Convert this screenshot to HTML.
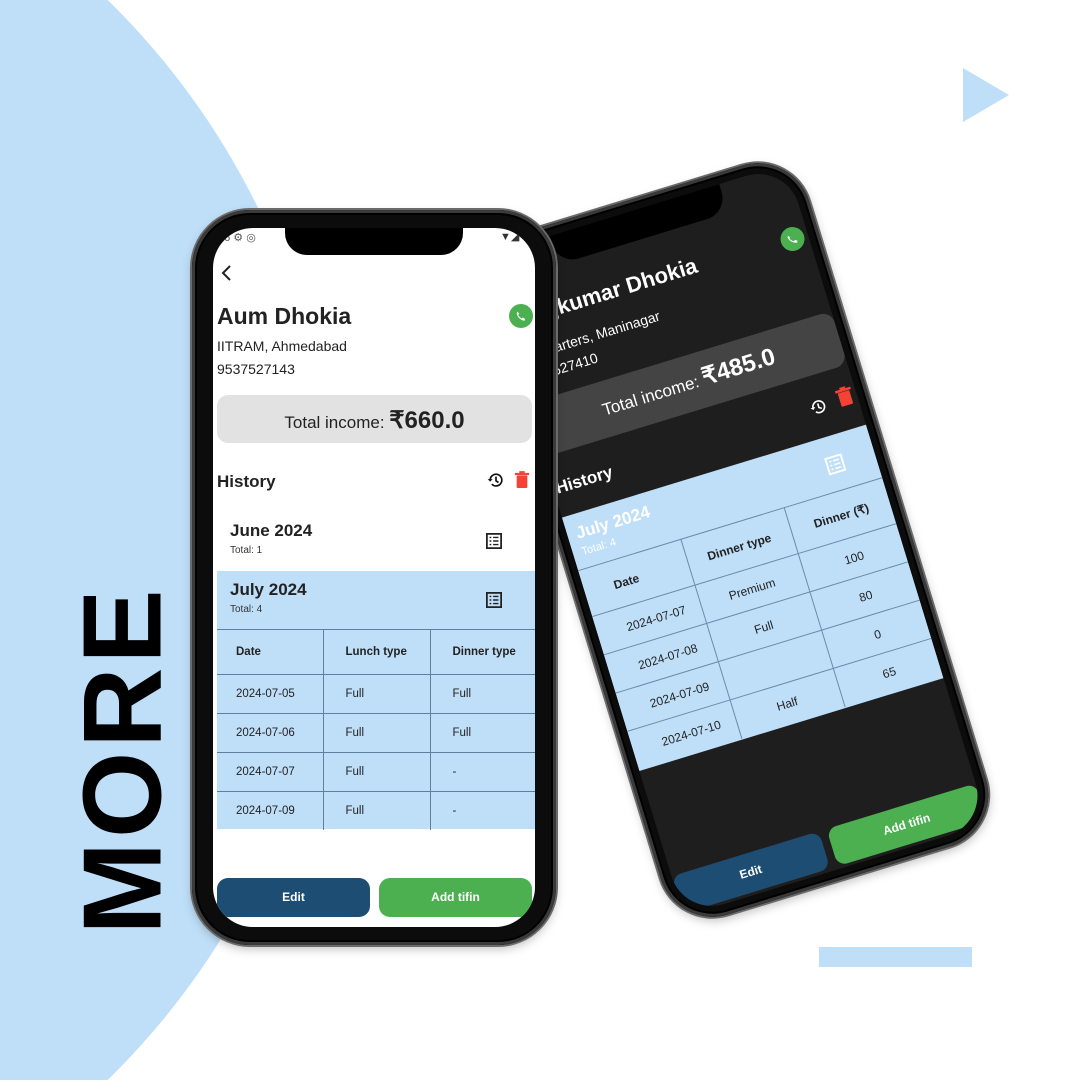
<!DOCTYPE html>
<html style="width:1080px;height:1080px;overflow:hidden"><head><meta charset="utf-8"><style>
*{margin:0;padding:0;box-sizing:border-box}
body{width:1080px;height:1080px;overflow:hidden;background:#fff;font-family:"Liberation Sans",sans-serif}
#wrap{position:relative;width:1080px;height:1080px;overflow:hidden}
.abs{position:absolute}
.more{position:absolute;left:123px;top:760px;transform:translate(-50%,-50%) rotate(-90deg);font-size:111px;font-weight:bold;color:#000;letter-spacing:4px;line-height:1;white-space:nowrap}
.phone{position:absolute;background:#0c0c0c;border-radius:58px;box-shadow:0 0 0 2px #6a6a6a,inset 0 0 0 3px #3a3a3a,inset 0 0 0 5px #000,0 4px 10px rgba(0,0,0,.25)}
.screen{position:absolute;overflow:hidden;border-radius:40px}
.notch{position:absolute;background:#000;border-radius:0 0 22px 22px}
.t{position:absolute;white-space:nowrap}
table{border-collapse:collapse;position:absolute}
</style></head><body><div id="wrap">
<svg class="abs" style="left:0;top:0" width="1080" height="1080"><circle cx="-420" cy="540" r="755" fill="#bfdff9"/><polygon points="963,68 1009,95 963,122" fill="#bfdff9"/><rect x="819" y="947" width="153" height="20" fill="#bfdff9"/></svg>
<div class="more">MORE</div>

<!-- RIGHT PHONE -->
<div class="phone" style="left:565px;top:184px;width:340px;height:712px;transform:rotate(-17deg);border-radius:54px">
 <div class="screen" style="left:11px;top:11px;width:318px;height:690px;background:#1e1e1e;border-radius:42px">
  <div class="notch" style="left:70px;top:0;width:178px;height:30px"></div>
  <div class="abs" style="left:290px;top:62px;width:24px;height:24px;border-radius:50%;background:#4caf50"><svg width="24" height="24" viewBox="0 0 24 24"><path d="M8.6 7.5l1.6 2.2-1 1.2c.8 1.6 2 2.8 3.6 3.6l1.2-1 2.2 1.6-.8 1.6c-3.8-.3-7.4-3.9-7.7-7.7z" fill="#fff"/></svg></div>
  <div class="t" style="left:23px;top:58px;font-size:22px;font-weight:bold;color:#fff">Rajkumar Dhokia</div>
  <div class="t" style="left:24px;top:100px;font-size:14px;color:#fff">Quarters, Maninagar</div>
  <div class="t" style="left:3px;top:122px;font-size:14px;color:#fff">9537527410</div>
  <div class="abs" style="left:3px;top:154px;width:315px;height:56px;background:#444;border-radius:12px"></div>
  <div class="t" style="left:3px;top:166px;width:315px;text-align:center;color:#fff;font-size:17px">Total income: <b style="font-size:24px">₹485.0</b></div>
  <div class="t" style="left:3px;top:234px;font-size:17px;font-weight:bold;color:#fff">History</div>
  <svg class="abs" style="left:268px;top:232px" width="20" height="20" viewBox="0 0 24 24"><path d="M5 12a7 7 0 1 1 2 5" fill="none" stroke="#fff" stroke-width="2"/><path d="M2 11l3 3 3-3" fill="#fff"/><path d="M12 8v5l3 2" fill="none" stroke="#fff" stroke-width="2"/></svg>
  <svg class="abs" style="left:297px;top:230px" width="18" height="20" viewBox="0 0 18 20"><rect x="3" y="5" width="12" height="14" rx="1" fill="#f44336"/><rect x="1" y="2" width="16" height="2.5" fill="#f44336"/><rect x="6" y="0" width="6" height="3" fill="#f44336"/></svg>
  <div class="abs" style="left:0;top:273px;width:318px;height:265px;background:#bfdff9"></div>
  <div class="t" style="left:9px;top:283px;font-size:17px;font-weight:bold;color:#fff">July 2024</div>
  <div class="t" style="left:9px;top:306px;font-size:11px;color:#fff">Total: 4</div>
  <svg class="abs" style="left:268px;top:293px" width="18" height="18" viewBox="0 0 18 18"><rect x="1" y="1" width="16" height="16" fill="none" stroke="#fff" stroke-width="2"/><path d="M4 5h2M8 5h6M4 9h2M8 9h6M4 13h2M8 13h6" stroke="#fff" stroke-width="1.6"/></svg>
  <table style="left:-2px;top:328px;width:322px;font-size:12px;color:#222">
   <tr style="height:48px"><th style="width:109px;font-weight:bold;text-align:left;padding-left:32px;border:1px solid #6c8aa8;border-left:none">Date</th><th style="width:108px;border:1px solid #6c8aa8">Dinner type</th><th style="border:1px solid #6c8aa8;border-right:none">Dinner (₹)</th></tr>
   <tr style="height:40px"><td style="padding-left:32px;border:1px solid #6c8aa8;border-left:none">2024-07-07</td><td style="text-align:center;border:1px solid #6c8aa8">Premium</td><td style="text-align:center;border:1px solid #6c8aa8;border-right:none">100</td></tr>
   <tr style="height:40px"><td style="padding-left:32px;border:1px solid #6c8aa8;border-left:none">2024-07-08</td><td style="text-align:center;border:1px solid #6c8aa8">Full</td><td style="text-align:center;border:1px solid #6c8aa8;border-right:none">80</td></tr>
   <tr style="height:40px"><td style="padding-left:32px;border:1px solid #6c8aa8;border-left:none">2024-07-09</td><td style="border:1px solid #6c8aa8"></td><td style="text-align:center;border:1px solid #6c8aa8;border-right:none">0</td></tr>
   <tr style="height:40px"><td style="padding-left:32px;border:1px solid #6c8aa8;border-left:none;border-bottom:none">2024-07-10</td><td style="text-align:center;border:1px solid #6c8aa8;border-bottom:none">Half</td><td style="text-align:center;border:1px solid #6c8aa8;border-right:none;border-bottom:none">65</td></tr>
  </table>
  <div class="abs" style="left:0;top:648px;width:154px;height:39px;background:#1e4d73;border-radius:10px;color:#fff;font-weight:bold;font-size:12px;text-align:center;line-height:39px">Edit</div>
  <div class="abs" style="left:162px;top:648px;width:156px;height:39px;background:#4caf50;border-radius:10px;color:#fff;font-weight:bold;font-size:12px;text-align:center;line-height:39px">Add tifin</div>
 </div>
</div>

<!-- LEFT PHONE -->
<div class="phone" style="left:192px;top:210px;width:364px;height:735px">
 <div class="screen" style="left:21px;top:18px;width:322px;height:699px;background:#fff">
  <div class="notch" style="left:72px;top:0;width:178px;height:27px"></div>
  <div class="t" style="left:5px;top:3px;font-size:11px;color:#555">06 ⚙ ◎</div>
  <div class="t" style="left:287px;top:2px;font-size:11px;color:#333">▼◢</div>
  <svg class="abs" style="left:7px;top:36px" width="14" height="18" viewBox="0 0 14 18"><path d="M10 2L3 9l7 7" fill="none" stroke="#222" stroke-width="2"/></svg>
  <div class="t" style="left:4px;top:75px;font-size:23px;font-weight:bold;color:#222">Aum Dhokia</div>
  <div class="abs" style="left:296px;top:76px;width:24px;height:24px;border-radius:50%;background:#4caf50"><svg width="24" height="24" viewBox="0 0 24 24"><path d="M8.6 7.5l1.6 2.2-1 1.2c.8 1.6 2 2.8 3.6 3.6l1.2-1 2.2 1.6-.8 1.6c-3.8-.3-7.4-3.9-7.7-7.7z" fill="#fff"/></svg></div>
  <div class="t" style="left:4px;top:110px;font-size:14px;color:#222">IITRAM, Ahmedabad</div>
  <div class="t" style="left:4px;top:133px;font-size:14px;color:#222">9537527143</div>
  <div class="abs" style="left:4px;top:167px;width:315px;height:48px;background:#e2e2e2;border-radius:11px"></div>
  <div class="t" style="left:4px;top:178px;width:315px;text-align:center;color:#222;font-size:17px">Total income: <b style="font-size:24px">₹660.0</b></div>
  <div class="t" style="left:4px;top:244px;font-size:17px;font-weight:bold;color:#222">History</div>
  <svg class="abs" style="left:273px;top:242px" width="20" height="20" viewBox="0 0 24 24"><path d="M5 12a7 7 0 1 1 2 5" fill="none" stroke="#111" stroke-width="2"/><path d="M2 11l3 3 3-3" fill="#111"/><path d="M12 8v5l3 2" fill="none" stroke="#111" stroke-width="2"/></svg>
  <svg class="abs" style="left:301px;top:243px" width="16" height="18" viewBox="0 0 18 20"><rect x="3" y="5" width="12" height="14" rx="1" fill="#f44336"/><rect x="1" y="2" width="16" height="2.5" fill="#f44336"/><rect x="6" y="0" width="6" height="3" fill="#f44336"/></svg>
  <div class="t" style="left:17px;top:293px;font-size:17px;font-weight:bold;color:#222">June 2024</div>
  <div class="t" style="left:17px;top:317px;font-size:10px;color:#333">Total: 1</div>
  <svg class="abs" style="left:273px;top:305px" width="16" height="16" viewBox="0 0 18 18"><rect x="1" y="1" width="16" height="16" fill="none" stroke="#222" stroke-width="2"/><path d="M4 5h2M8 5h6M4 9h2M8 9h6M4 13h2M8 13h6" stroke="#222" stroke-width="1.6"/></svg>
  <div class="abs" style="left:4px;top:343px;width:318px;height:258px;background:#bfdff9"></div>
  <div class="t" style="left:17px;top:352px;font-size:17px;font-weight:bold;color:#222">July 2024</div>
  <div class="t" style="left:17px;top:376px;font-size:10px;color:#333">Total: 4</div>
  <svg class="abs" style="left:273px;top:364px" width="16" height="16" viewBox="0 0 18 18"><rect x="1" y="1" width="16" height="16" fill="none" stroke="#222" stroke-width="2"/><path d="M4 5h2M8 5h6M4 9h2M8 9h6M4 13h2M8 13h6" stroke="#222" stroke-width="1.6"/></svg>
  <table style="left:4px;top:401px;width:318px;font-size:11.5px;color:#222">
   <tr style="height:45px;font-weight:bold"><td style="width:106px;padding-left:19px;border:1px solid #5f7f9f;border-left:none">Date</td><td style="width:107px;padding-left:22px;border:1px solid #5f7f9f">Lunch type</td><td style="padding-left:22px;border:1px solid #5f7f9f;border-right:none">Dinner type</td></tr>
   <tr style="height:39px"><td style="padding-left:19px;border:1px solid #5f7f9f;border-left:none">2024-07-05</td><td style="padding-left:22px;border:1px solid #5f7f9f">Full</td><td style="padding-left:22px;border:1px solid #5f7f9f;border-right:none">Full</td></tr>
   <tr style="height:39px"><td style="padding-left:19px;border:1px solid #5f7f9f;border-left:none">2024-07-06</td><td style="padding-left:22px;border:1px solid #5f7f9f">Full</td><td style="padding-left:22px;border:1px solid #5f7f9f;border-right:none">Full</td></tr>
   <tr style="height:39px"><td style="padding-left:19px;border:1px solid #5f7f9f;border-left:none">2024-07-07</td><td style="padding-left:22px;border:1px solid #5f7f9f">Full</td><td style="padding-left:22px;border:1px solid #5f7f9f;border-right:none">-</td></tr>
   <tr style="height:38px"><td style="padding-left:19px;border:1px solid #5f7f9f;border-left:none;border-bottom:none">2024-07-09</td><td style="padding-left:22px;border:1px solid #5f7f9f;border-bottom:none">Full</td><td style="padding-left:22px;border:1px solid #5f7f9f;border-right:none;border-bottom:none">-</td></tr>
  </table>
  <div class="abs" style="left:4px;top:650px;width:153px;height:39px;background:#1e4d73;border-radius:11px;color:#fff;font-weight:bold;font-size:12px;text-align:center;line-height:39px">Edit</div>
  <div class="abs" style="left:166px;top:650px;width:153px;height:39px;background:#4caf50;border-radius:11px;color:#fff;font-weight:bold;font-size:12px;text-align:center;line-height:39px">Add tifin</div>
 </div>
</div>
</div></body></html>
